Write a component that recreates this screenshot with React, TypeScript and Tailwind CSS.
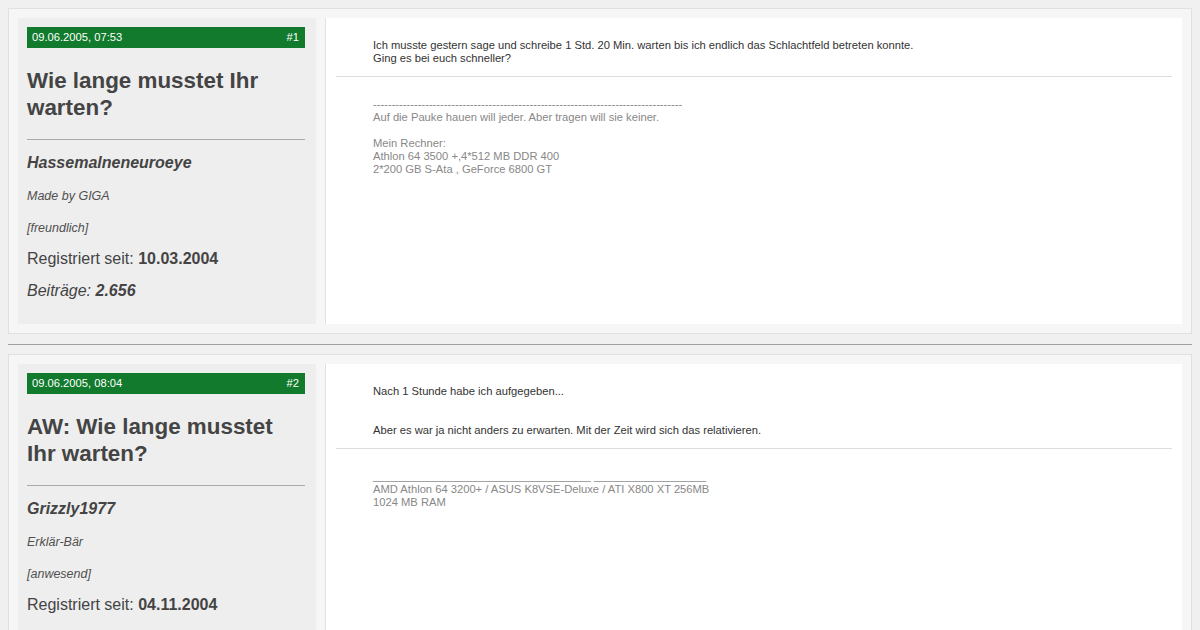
import React from "react";

type Post = {
  date: string;
  num: string;
  title: string;
  user: string;
  rank: string;
  status: string;
  registered: string;
  posts?: string;
  body: React.ReactNode;
  sig: React.ReactNode;
};

const posts: Post[] = [
  {
    date: "09.06.2005, 07:53",
    num: "#1",
    title: "Wie lange musstet Ihr warten?",
    user: "Hassemalneneuroeye",
    rank: "Made by GIGA",
    status: "[freundlich]",
    registered: "10.03.2004",
    posts: "2.656",
    body: (
      <>
        Ich musste gestern sage und schreibe 1 Std. 20 Min. warten bis ich endlich das Schlachtfeld betreten konnte.
        <br />
        Ging es bei euch schneller?
      </>
    ),
    sig: (
      <>
        {"-".repeat(83)}
        <br />
        Auf die Pauke hauen will jeder. Aber tragen will sie keiner.
        <br />
        <br />
        Mein Rechner:
        <br />
        Athlon 64 3500 +,4*512 MB DDR 400
        <br />
        2*200 GB S-Ata , GeForce 6800 GT
      </>
    ),
  },
  {
    date: "09.06.2005, 08:04",
    num: "#2",
    title: "AW: Wie lange musstet Ihr warten?",
    user: "Grizzly1977",
    rank: "Erklär-Bär",
    status: "[anwesend]",
    registered: "04.11.2004",
    body: (
      <>
        Nach 1 Stunde habe ich aufgegeben...
        <br />
        <br />
        <br />
        Aber es war ja nicht anders zu erwarten. Mit der Zeit wird sich das relativieren.
      </>
    ),
    sig: (
      <>
        {"_".repeat(35) + " " + "_".repeat(18)}
        <br />
        AMD Athlon 64 3200+ / ASUS K8VSE-Deluxe / ATI X800 XT 256MB
        <br />
        1024 MB RAM
      </>
    ),
  },
];

function PostBox({ p }: { p: Post }) {
  return (
    <div className="flex border border-[#e0e0e0] bg-[#f6f6f6] p-[9px]">
      <div className="w-[298px] shrink-0 bg-[#eeeeee] pl-[9px] pr-[11px] pt-[9px] pb-[24px]">
        <div className="flex h-[21px] items-center justify-between bg-[#117a2c] pl-[5px] pr-[6px] text-[11.2px] text-white">
          <span>{p.date}</span>
          <span>{p.num}</span>
        </div>
        <h2 className="mt-[19px] text-[22.4px] font-bold leading-[27px] text-[#444]">{p.title}</h2>
        <div className="mt-[18px] border-t border-[#aaaaaa]" />
        <div className="mt-[14px] text-[16px] font-bold italic leading-[18px] text-[#444]">{p.user}</div>
        <div className="mt-[17px] text-[12.5px] italic leading-[14px] text-[#505050]">{p.rank}</div>
        <div className="mt-[18px] text-[12.5px] italic leading-[14px] text-[#505050]">{p.status}</div>
        <div className="mt-[15px] text-[16px] leading-[18px] text-[#444]">
          Registriert seit: <b>{p.registered}</b>
        </div>
        {p.posts && (
          <div className="mt-[14px] text-[16px] italic leading-[18px] text-[#444]">
            Beiträge: <b>{p.posts}</b>
          </div>
        )}
      </div>
      <div className="ml-[9px] flex-1 border-l border-[#e2e2e2] bg-white px-[10px] pt-[21px]">
        <div className="pl-[37px] text-[11.2px] leading-[13px] text-[#333]">{p.body}</div>
        <div className="mt-[11px] border-t border-[#dddddd]" />
        <div className="mt-[21px] whitespace-pre pl-[37px] text-[11.2px] leading-[13px] text-[#888]">{p.sig}</div>
      </div>
    </div>
  );
}

export default function App() {
  return (
    <div
      className="min-h-[630px] bg-[#f0f0f0] p-[8px]"
      style={{ fontFamily: '"Liberation Sans", Arial, sans-serif' }}
    >
      <PostBox p={posts[0]} />
      <div className="mt-[10px] mb-[9px] border-t border-[#a0a0a0]" />
      <PostBox p={posts[1]} />
    </div>
  );
}
